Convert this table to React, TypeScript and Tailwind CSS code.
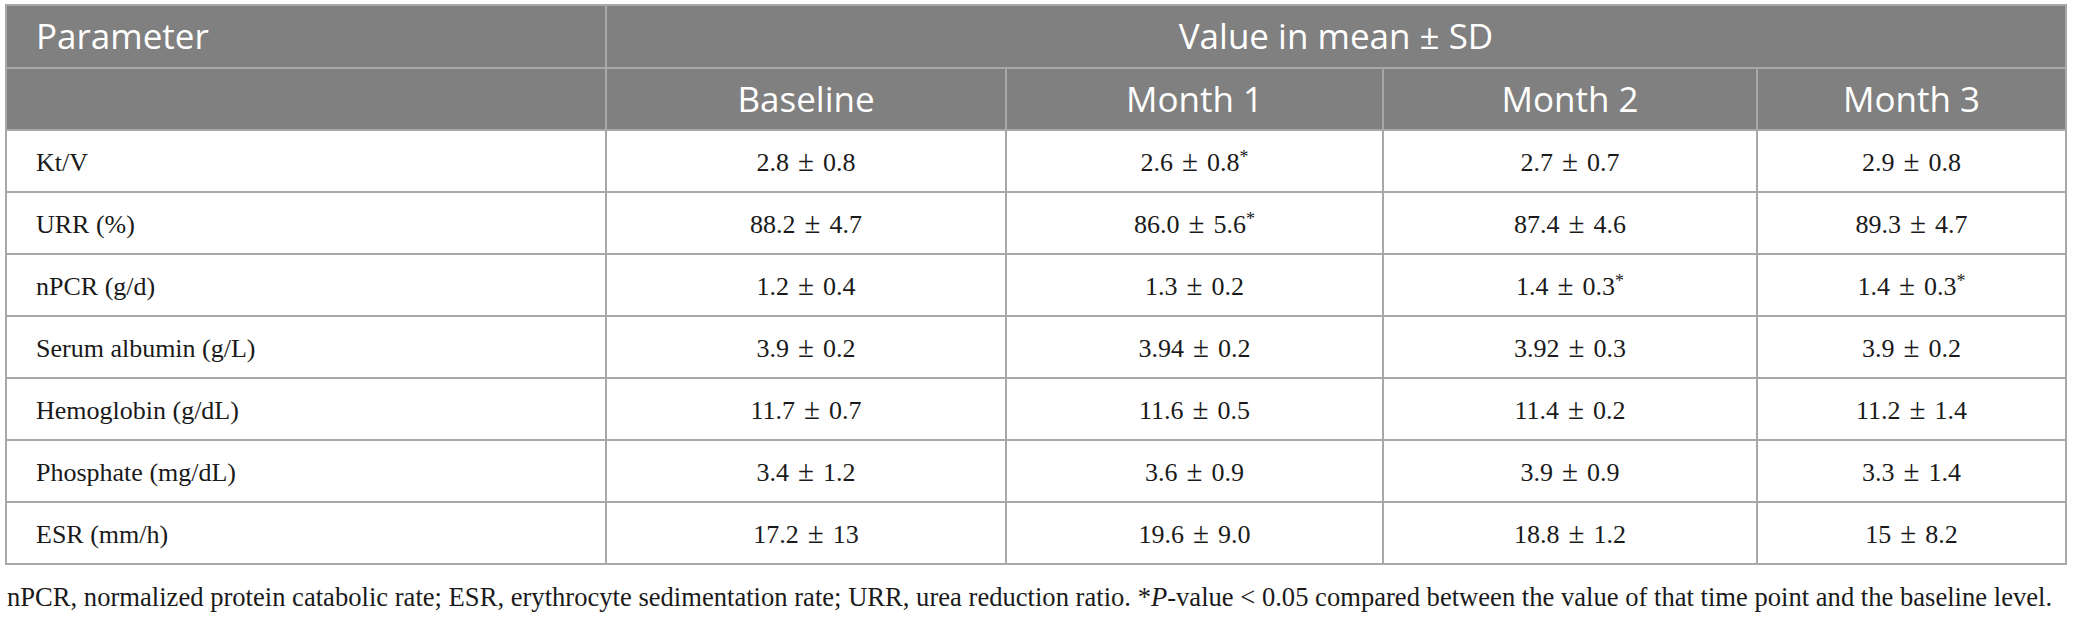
import React from "react";

const rows: [string, string, string, string, string][] = [
  ["Kt/V", "2.8 ± 0.8", "2.6 ± 0.8*", "2.7 ± 0.7", "2.9 ± 0.8"],
  ["URR (%)", "88.2 ± 4.7", "86.0 ± 5.6*", "87.4 ± 4.6", "89.3 ± 4.7"],
  ["nPCR (g/d)", "1.2 ± 0.4", "1.3 ± 0.2", "1.4 ± 0.3*", "1.4 ± 0.3*"],
  ["Serum albumin (g/L)", "3.9 ± 0.2", "3.94 ± 0.2", "3.92 ± 0.3", "3.9 ± 0.2"],
  ["Hemoglobin (g/dL)", "11.7 ± 0.7", "11.6 ± 0.5", "11.4 ± 0.2", "11.2 ± 1.4"],
  ["Phosphate (mg/dL)", "3.4 ± 1.2", "3.6 ± 0.9", "3.9 ± 0.9", "3.3 ± 1.4"],
  ["ESR (mm/h)", "17.2 ± 13", "19.6 ± 9.0", "18.8 ± 1.2", "15 ± 8.2"],
];

function Val({ v }: { v: string }) {
  const star = v.endsWith("*");
  const core = star ? v.slice(0, -1) : v;
  const [a, b] = core.split(" ± ");
  return (
    <span className="flex items-baseline">
      <span>{a}</span>
      <span className="mx-[9px] text-[29px] leading-none">±</span>
      <span>{b}</span>
      {star && <span className="relative top-[-8px] text-[18px]">*</span>}
    </span>
  );
}

const head =
  "bg-[#808080] text-white text-[35px] font-['Open_Sans',sans-serif] flex items-center";
const body =
  "bg-white text-[#1a1a1a] text-[26px] font-['Liberation_Serif',serif] flex items-center pt-[3px]";

export default function App() {
  return (
    <div className="w-[2075px] h-[620px] bg-white pl-[5px] pt-[4px]">
      <div className="grid grid-cols-[598px_398px_375px_372px_307px] gap-[2px] bg-[#a8a8a8] p-[2px] w-[2062px]">
        <div className={`${head} h-[61px] pl-[29px]`}>Parameter</div>
        <div className={`${head} h-[61px] col-span-4 justify-center`}>Value in mean ± SD</div>
        <div className={`${head} h-[60px]`} />
        {["Baseline", "Month 1", "Month 2", "Month 3"].map((h) => (
          <div key={h} className={`${head} h-[60px] justify-center`}>
            {h}
          </div>
        ))}
        {rows.map((r) => (
          <React.Fragment key={r[0]}>
            <div className={`${body} h-[60px] pl-[29px]`}>{r[0]}</div>
            {r.slice(1).map((v, i) => (
              <div key={i} className={`${body} h-[60px] justify-center`}>
                <Val v={v} />
              </div>
            ))}
          </React.Fragment>
        ))}
      </div>
      <p className="mt-[17px] pl-[2px] text-[26.6px] leading-[30px] text-[#1a1a1a] whitespace-nowrap font-['Liberation_Serif',serif]">
        nPCR, normalized protein catabolic rate; ESR, erythrocyte sedimentation rate; URR, urea reduction ratio. *<i>P</i>-value &lt; 0.05 compared between the value of that time point and the baseline level.
      </p>
    </div>
  );
}
